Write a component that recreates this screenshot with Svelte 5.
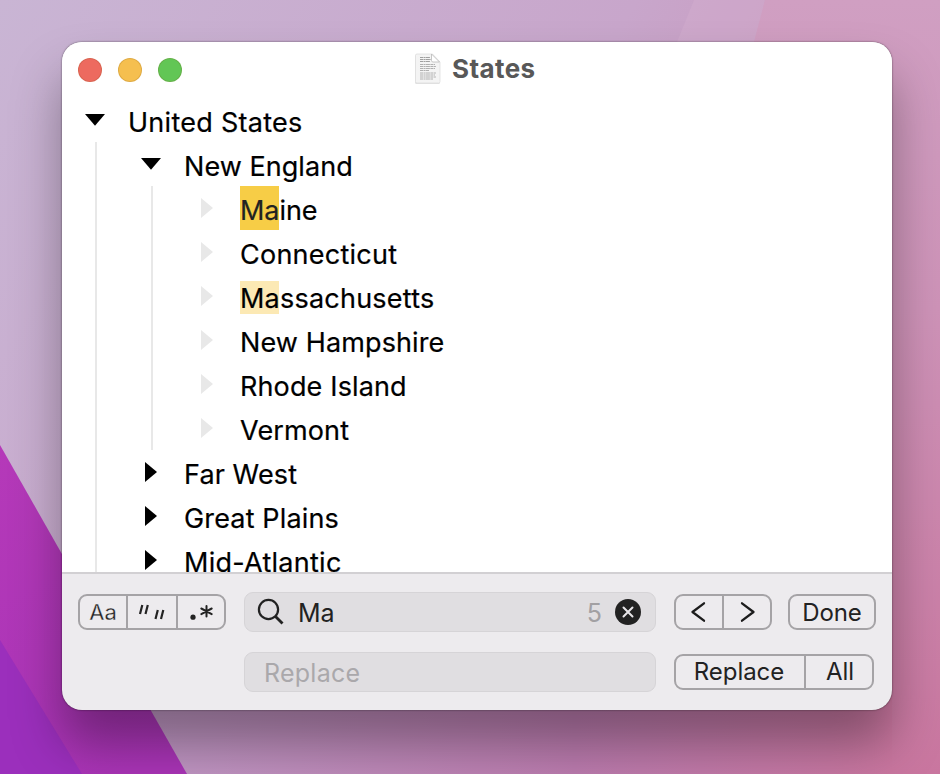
<script>
  const rows = [
    { label: 'United States', depth: 0, state: 'open', track: 0.27 },
    { label: 'New England', depth: 1, state: 'open', track: 0.05 },
    { label: 'Maine', depth: 2, state: 'leaf', hit: 'current', track: -0.05 },
    { label: 'Connecticut', depth: 2, state: 'leaf', track: 0.25 },
    { label: 'Massachusetts', depth: 2, state: 'leaf', hit: 'other', track: 0.22 },
    { label: 'New Hampshire', depth: 2, state: 'leaf', track: 0.12 },
    { label: 'Rhode Island', depth: 2, state: 'leaf', track: 0.14 },
    { label: 'Vermont', depth: 2, state: 'leaf', track: 0.13 },
    { label: 'Far West', depth: 1, state: 'closed', track: 0.1 },
    { label: 'Great Plains', depth: 1, state: 'closed', track: 0.15 },
    { label: 'Mid-Atlantic', depth: 1, state: 'closed', track: 0.27 }
  ];
</script>

<div class="desktop">
  <svg class="wallpaper" width="940" height="774" viewBox="0 0 940 774">
    <defs>
      <linearGradient id="base" x1="0" y1="0" x2="940" y2="560" gradientUnits="userSpaceOnUse">
        <stop offset="0" stop-color="#c9b5d4" />
        <stop offset=".5" stop-color="#c8a6cb" />
        <stop offset="1" stop-color="#cb86ab" />
      </linearGradient>
      <linearGradient id="rose" x1="0" y1="0" x2="0" y2="1">
        <stop offset="0" stop-color="#d09fc2" />
        <stop offset=".4" stop-color="#ce93b8" />
        <stop offset="1" stop-color="#c9769f" />
      </linearGradient>
      <linearGradient id="magenta" x1="0" y1="445" x2="120" y2="774" gradientUnits="userSpaceOnUse">
        <stop offset="0" stop-color="#b539b9" />
        <stop offset="1" stop-color="#a934b6" />
      </linearGradient>
      <linearGradient id="low" x1="100" y1="0" x2="892" y2="0" gradientUnits="userSpaceOnUse">
        <stop offset="0" stop-color="#c09ac6" />
        <stop offset=".6" stop-color="#bb7bae" />
        <stop offset="1" stop-color="#c9769f" />
      </linearGradient>
    </defs>
    <rect width="940" height="774" fill="url(#base)" />
    <path d="M694 0H765L690 330H560Z" fill="#d4b0d0" opacity=".4" />
    <path d="M765 0H940V774H560Z" fill="url(#rose)" />
    <rect x="100" y="690" width="792" height="84" fill="url(#low)" />
    <path d="M0 445L187 774H0Z" fill="url(#magenta)" />
    <path d="M0 640L82 774H0Z" fill="#9b2fbc" />
  </svg>

  <main class="window">
    <header class="titlebar">
      <div class="lights"><i class="red"></i><i class="amber"></i><i class="green"></i></div>
      <div class="title">
        <svg width="28" height="32" viewBox="0 0 28 32">
          <path d="M2.500 1.500H18L26 9V29.500Q26 31 24.500 31H2.500Q1 31 1 29.500V3Q1 1.500 2.500 1.500Z" fill="#c9c9c9" opacity=".55" />
          <path d="M3 1H18.500L26 9V28.500Q26 30 24.500 30H3Q1.500 30 1.500 28.500V2.500Q1.500 1 3 1Z" fill="#f4f4f4" stroke="#dedede" stroke-width=".8" />
          <path d="M17.500 1V7.500Q17.500 9 19 9H25.500Z" fill="#fff" stroke="#b9b9b9" stroke-width=".8" />
          <g stroke="#b0b0b0" stroke-width="1.100" stroke-dasharray="3 .5 2 .4 4 .5">
            <path d="M6 4.500H16M6 6.500H17M6 8.500H16" stroke="#a0a0a0" />
            <path d="M6 11.500H21M6 13.500H22M6 15.500H21M6 17.500H15M6 20H22M6 22H21M6 24H22M6 26H19" />
          </g>
        </svg>
        <span>States</span>
      </div>
    </header>

    <section class="tree">
      {#each rows as row}
        <div class="row {row.state}">
          {#each Array(row.depth) as _}<span class="guide"></span>{/each}
          <span class="toggle">
            {#if row.state === 'open'}
              <svg width="20" height="12" viewBox="0 0 20 12"><path d="M0 0H20L10 11.800Z" /></svg>
            {:else}
              <svg width="12" height="20" viewBox="0 0 12 20"><path d="M0 0V20L12 10Z" /></svg>
            {/if}
          </span>
          <span class="label" style="letter-spacing: {row.track}px">{#if row.hit}<mark class={row.hit}>{row.label.slice(0, 2)}</mark>{row.label.slice(2)}{:else}{row.label}{/if}</span>
        </div>
      {/each}
    </section>

    <footer class="find">
      <div class="line">
        <div class="group modes">
          <button class="case">Aa</button>
          <button class="word">
            <svg width="30" height="20" viewBox="0 0 30 20" fill="none" stroke="#232323" stroke-width="2.200"><path d="M5.300 3L3 12M10.800 3L8.500 12M20.800 8L18.500 17M26.300 8L24 17" /></svg>
          </button>
          <button class="regex">
            <svg width="26" height="20" viewBox="0 0 26 20" fill="none" stroke="#232323" stroke-width="2" stroke-linecap="round"><circle cx="5" cy="15.200" r="2.600" fill="#232323" stroke="none" /><path d="M18.500 4V14.600M13.300 6.500L23.700 12.100M23.700 6.500L13.300 12.100" /></svg>
          </button>
        </div>
        <div class="field">
          <svg width="28" height="28" viewBox="0 0 28 28" fill="none" stroke="#222" stroke-width="2.200"><circle cx="11.500" cy="11.500" r="9.600" /><path d="M18.500 18.500L25.500 25.500" stroke-width="2.800" /></svg>
          <span class="query">Ma</span>
          <span class="count">5</span>
          <svg width="26" height="26" viewBox="0 0 26 26"><circle cx="13" cy="13" r="13" fill="#222" /><path d="M8.500 8.500L17.500 17.500M17.500 8.500L8.500 17.500" stroke="#e8e6e9" stroke-width="2" stroke-linecap="round" /></svg>
        </div>
        <div class="group nav">
          <button><svg width="18" height="22" viewBox="0 0 18 22"><path d="M14 2.300L2.500 11L14 19.700" fill="none" stroke="#1c1c1c" stroke-width="2.300" stroke-linecap="round" stroke-linejoin="round" /></svg></button>
          <button><svg width="18" height="22" viewBox="0 0 18 22"><path d="M4 2.300L15.500 11L4 19.700" fill="none" stroke="#1c1c1c" stroke-width="2.300" stroke-linecap="round" stroke-linejoin="round" /></svg></button>
        </div>
        <div class="group done"><button>Done</button></div>
      </div>
      <div class="line second">
        <div class="field"><span class="hint">Replace</span></div>
        <div class="group swap"><button class="one">Replace</button><button class="all">All</button></div>
      </div>
    </footer>
  </main>
</div>

<style>
  .desktop {
    width: 940px;
    height: 774px;
    box-sizing: border-box;
    padding: 42px 48px 64px 62px;
    position: relative;
    overflow: hidden;
    font-family: Inter, "Liberation Sans", sans-serif;
  }
  .wallpaper { position: absolute; inset: 0; }
  svg { display: block; flex: none; }
  .window {
    position: relative;
    height: 668px;
    display: flex;
    flex-direction: column;
    border-radius: 20px;
    background: #edebee;
    box-shadow: 0 0 2px rgba(0, 0, 0, .6), 0 34px 50px rgba(0, 0, 0, .34);
  }
  .titlebar {
    height: 56px;
    flex: none;
    display: flex;
    align-items: center;
    background: #fff;
    border-radius: 20px 20px 0 0;
  }
  .lights { display: flex; gap: 16px; padding-left: 16px; width: 336px; box-sizing: border-box; }
  .lights i { width: 24px; height: 24px; box-sizing: border-box; border-radius: 50%; border: 1px solid rgba(110, 60, 0, .16); }
  .red { background: #ed6a5f; }
  .amber { background: #f5bf4f; }
  .green { background: #62c655; }
  .title {
    display: flex;
    align-items: center;
    gap: 10px;
    margin-left: 16px;
    margin-top: -2px;
    color: #585858;
    font-size: 26px;
    font-weight: 700;
    letter-spacing: .4px;
    line-height: 32px;
  }
  .tree { height: 474px; flex: none; overflow: hidden; background: #fff; }
  .row { height: 44px; display: flex; }
  .guide {
    width: 56px;
    flex: none;
    background: linear-gradient(#e8e8e8, #e8e8e8) 33px 0 / 2px 100% no-repeat;
  }
  .toggle { width: 66px; flex: none; display: flex; align-items: center; box-sizing: border-box; padding-left: 27px; }
  .open .toggle { padding-left: 23px; }
  .leaf .toggle { fill: #e8e8e8; }
  .label { height: 44px; font-size: 27px; line-height: 50px; color: #000; white-space: nowrap; -webkit-text-stroke: .2px; }
  mark { color: #222; display: inline-block; height: 44px; vertical-align: top; }
  .current { background: #f7cd46; }
  .other { background: linear-gradient(#fce9b4, #fce9b4) 0 7px / 39px 33px no-repeat; color: #000; }
  .find { flex: 1; border-top: 2px solid #d2d0d3; padding: 18px 16px 0; display: flex; flex-direction: column; gap: 20px; }
  .line { display: flex; align-items: center; height: 40px; }
  .second { padding-left: 166px; }
  .group {
    display: flex;
    height: 36px;
    box-sizing: border-box;
    border: 2px solid #a5a3a6;
    border-radius: 9px;
  }
  button {
    appearance: none;
    font: 24px/32px Inter, "Liberation Sans", sans-serif;
    color: #222;
    background: none;
    border: 0;
    padding: 0;
    flex: 1;
    display: flex;
    align-items: center;
    justify-content: center;
  }
  button + button { border-left: 2px solid #a5a3a6; }
  .modes { width: 148px; margin-right: 18px; }
  .case { font-size: 22px; flex: 0 0 46px; -webkit-text-stroke: .3px #edebee; }
  .word { flex: 0 0 50px; }
  .nav { width: 98px; margin: 0 16px 0 18px; }
  .done { width: 88px; }
  .done button { padding-top: 2px; letter-spacing: -.1px; }
  .swap { width: 200px; margin-left: 18px; }
  .swap .one { flex: 0 0 128px; letter-spacing: -.05px; padding-right: 2px; box-sizing: border-box; }
  .swap .all { padding-left: 2px; }
  .field {
    width: 412px;
    height: 40px;
    box-sizing: border-box;
    border: 1px solid #d6d4d7;
    border-radius: 9px;
    background: #e0dee1;
    display: flex;
    align-items: center;
    padding: 0 14px 0 12px;
    font-size: 25px;
    line-height: 38px;
  }
  .query { margin-left: 13px; flex: 1; color: #222; padding-top: 2px; }
  .count { color: #a2a0a3; margin-right: 13px; padding-top: 2px; }
  .hint { color: #aaa8ab; padding: 2px 0 0 7px; letter-spacing: .25px; }
</style>
